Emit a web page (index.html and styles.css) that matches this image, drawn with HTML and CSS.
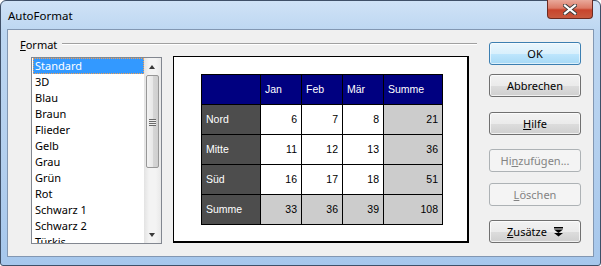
FILE: index.html
```html
<!DOCTYPE html>
<html lang="de">
<head>
    <meta charset="UTF-8">
    <title>AutoFormat</title>
    <link rel="stylesheet" href="styles.css">
</head>
<body>
    <div class="window">
        <div class="titlebar">
            <span class="title">AutoFormat</span>
            <div class="close-btn">
                <svg width="14" height="11" viewBox="0 0 14 11">
                    <path d="M2 1.5 L12 9.5 M12 1.5 L2 9.5" stroke="#3b3b3b" stroke-width="4" stroke-linecap="square"/>
                    <path d="M2 1.5 L12 9.5 M12 1.5 L2 9.5" stroke="#ffffff" stroke-width="2.2" stroke-linecap="square"/>
                </svg>
            </div>
        </div>
        <div class="client">
            <div class="main">
                <div class="group-head">
                    <span><u>F</u>ormat</span>
                    <span class="line"></span>
                </div>
                <div class="group-body">
                    <div class="listbox">
                        <ul class="items">
                            <li class="selected">Standard</li>
                            <li>3D</li>
                            <li>Blau</li>
                            <li>Braun</li>
                            <li>Flieder</li>
                            <li>Gelb</li>
                            <li>Grau</li>
                            <li>Grün</li>
                            <li>Rot</li>
                            <li>Schwarz 1</li>
                            <li>Schwarz 2</li>
                            <li>Türkis</li>
                        </ul>
                        <div class="scrollbar">
                            <div class="arrow up"></div>
                            <div class="thumb">
                                <div class="grip"></div>
                            </div>
                            <div class="track"></div>
                            <div class="arrow down"></div>
                        </div>
                    </div>
                    <div class="preview">
                        <table class="sample">
                            <tr class="head">
                                <td></td>
                                <td>Jan</td>
                                <td>Feb</td>
                                <td>Mär</td>
                                <td>Summe</td>
                            </tr>
                            <tr>
                                <td class="label">Nord</td>
                                <td>6</td>
                                <td>7</td>
                                <td>8</td>
                                <td class="sum">21</td>
                            </tr>
                            <tr>
                                <td class="label">Mitte</td>
                                <td>11</td>
                                <td>12</td>
                                <td>13</td>
                                <td class="sum">36</td>
                            </tr>
                            <tr>
                                <td class="label">Süd</td>
                                <td>16</td>
                                <td>17</td>
                                <td>18</td>
                                <td class="sum">51</td>
                            </tr>
                            <tr>
                                <td class="label">Summe</td>
                                <td class="sum">33</td>
                                <td class="sum">36</td>
                                <td class="sum">39</td>
                                <td class="sum">108</td>
                            </tr>
                        </table>
                    </div>
                </div>
            </div>
            <div class="buttons">
                <div class="btn default btn-ok"><span>OK</span></div>
                <div class="btn btn-cancel"><span>Abbrechen</span></div>
                <div class="btn btn-help"><span><u>H</u>ilfe</span></div>
                <div class="btn disabled btn-add"><span>Hi<u>n</u>zufügen...</span></div>
                <div class="btn disabled btn-delete"><span><u>L</u>öschen</span></div>
                <div class="btn btn-more">
                    <span><u>Z</u>usätze</span>
                    <svg width="9" height="10" viewBox="0 0 9 10">
                        <rect x="0" y="0" width="9" height="1.5" fill="#000"/>
                        <path d="M0 2.5 H9 L4.5 6 Z" fill="#000"/>
                        <path d="M0 6 H9 L4.5 9.5 Z" fill="#000"/>
                    </svg>
                </div>
            </div>
        </div>
    </div>
</body>
</html>
```

FILE: styles.css
```css
body {
    margin: 0;
    padding: 0;
    font-family: "Noto Sans", "Open Sans", sans-serif;
    font-size: 11px;
    color: #000;
    background: #fff;
}

.window {
    width: 601px;
    height: 266px;
    box-sizing: border-box;
    border: 1px solid #3f5068;
    border-radius: 6px 6px 3px 3px;
    background: linear-gradient(to bottom, #cfe2f6 0%, #bcd6f1 12%, #b3cfee 60%, #a6c7ec 100%);
    padding: 0 6px 8px 6px;
    display: flex;
    flex-direction: column;
}

.titlebar {
    height: 28px;
    display: flex;
    align-items: flex-start;
    justify-content: space-between;
}

.title {
    align-self: center;
    padding-left: 1px;
    font-size: 11.5px;
}

.close-btn {
    width: 44px;
    height: 18px;
    margin-top: -1px;
    margin-right: 1px;
    border: 1px solid #6b2a20;
    border-top: none;
    border-radius: 0 0 4px 4px;
    background: linear-gradient(to bottom, #e9a99b 0%, #dc7a66 45%, #c8442c 55%, #c85a3f 100%);
    display: flex;
    align-items: center;
    justify-content: center;
}

.client {
    flex: 1;
    border: 1px solid #8297b2;
    background: #f0f0f0;
    display: flex;
}

/* left part: group "Format" */
.main {
    width: 457px;
    padding-left: 12px;
}

.group-head {
    margin-top: 6px;
    height: 16px;
    display: flex;
    align-items: center;
    gap: 5px;
}

.group-head .line {
    flex: 1;
    height: 1px;
    background: #a0a0a0;
    border-bottom: 1px solid #fff;
}

.group-body {
    margin-top: 4px;
    margin-left: 11px;
    display: flex;
    align-items: flex-start;
    gap: 11px;
}

.listbox {
    margin-top: 1px;
    width: 131px;
    height: 187px;
    box-sizing: border-box;
    border: 1px solid #828790;
    background: #fff;
    display: flex;
    overflow: hidden;
}

.items {
    list-style: none;
    margin: 0;
    padding: 0 0 0 1px;
    flex: 1;
    overflow: hidden;
}

.items li {
    height: 16px;
    line-height: 16px;
    padding-left: 2px;
    white-space: nowrap;
}

.items li.selected {
    background: #3399ff;
    color: #fff;
    box-sizing: border-box;
    border: 1px dotted #f5a050;
    line-height: 14px;
    padding-left: 1px;
}

.scrollbar {
    width: 17px;
    background: linear-gradient(to right, #e3e3e3, #f3f3f3 30%, #f3f3f3 70%, #e8e8e8);
    display: flex;
    flex-direction: column;
    align-items: center;
}

.arrow {
    height: 17px;
    width: 17px;
    position: relative;
}

.arrow::after {
    content: "";
    position: absolute;
    left: 5px;
    width: 0;
    height: 0;
    border-left: 3.5px solid transparent;
    border-right: 3.5px solid transparent;
}

.arrow.up::after {
    top: 7px;
    border-bottom: 4px solid #3a3a3a;
}

.arrow.down::after {
    top: 7px;
    border-top: 4px solid #3a3a3a;
}

.thumb {
    width: 13px;
    height: 93px;
    box-sizing: border-box;
    border: 1px solid #979797;
    border-radius: 2px;
    background: linear-gradient(to right, #f3f3f3, #e8e8e8 50%, #d6d6d6 51%, #cfcfcf);
    display: flex;
    align-items: center;
    justify-content: center;
}

.grip {
    width: 7px;
    height: 7px;
    background: repeating-linear-gradient(to bottom, #6a6a6a 0, #6a6a6a 1px, #eeeeee 1px, #eeeeee 2px);
    margin-top: 2px;
}

.track {
    flex: 1;
}

/* preview of the table format */
.preview {
    width: 296px;
    height: 187px;
    box-sizing: border-box;
    border: 1px solid #000;
    border-right-width: 2px;
    border-bottom-width: 2px;
    background: #fff;
    display: flex;
    align-items: center;
    justify-content: center;
}

.sample {
    border-collapse: collapse;
    font-family: "Liberation Sans", Arial, sans-serif;
    font-size: 10.5px;
    margin-left: 3px;
}

.sample td {
    border: 1px solid #000;
    height: 30px;
    width: 41px;
    padding: 0 4px 0 4px;
    box-sizing: border-box;
    text-align: right;
    background: #fff;
}

.sample td:first-child,
.sample td:last-child {
    width: 59px;
}

.sample .head td {
    background: #000080;
    color: #fff;
    text-align: left;
}

.sample td.label {
    background: #4d4d4d;
    color: #fff;
    text-align: left;
}

.sample td.sum {
    background: #cccccc;
}

/* right part: buttons */
.buttons {
    width: 92px;
    margin-left: 12px;
    display: flex;
    flex-direction: column;
}

.btn {
    height: 23px;
    box-sizing: border-box;
    border: 1px solid #707070;
    border-radius: 3px;
    background: linear-gradient(to bottom, #f2f2f2 0%, #ebebeb 50%, #dddddd 51%, #cfcfcf 100%);
    box-shadow: inset 0 0 0 1px rgba(255, 255, 255, 0.7);
    display: flex;
    align-items: center;
    justify-content: center;
    gap: 7px;
}

.btn.default {
    border-color: #3c7fb1;
    background: linear-gradient(to bottom, #eaf6fd 0%, #d9f0fc 50%, #bee6fd 51%, #a7d9f5 100%);
    box-shadow: inset 0 0 0 1px rgba(255, 255, 255, 0.6);
}

.btn.disabled {
    border-color: #adb2b5;
    background: #f4f4f4;
    color: #838383;
    box-shadow: none;
}

.btn-ok { margin-top: 12px; }
.btn-cancel { margin-top: 9px; }
.btn-help { margin-top: 15px; }
.btn-add { margin-top: 14px; }
.btn-delete { margin-top: 11px; }
.btn-more { margin-top: 14px; }
```
